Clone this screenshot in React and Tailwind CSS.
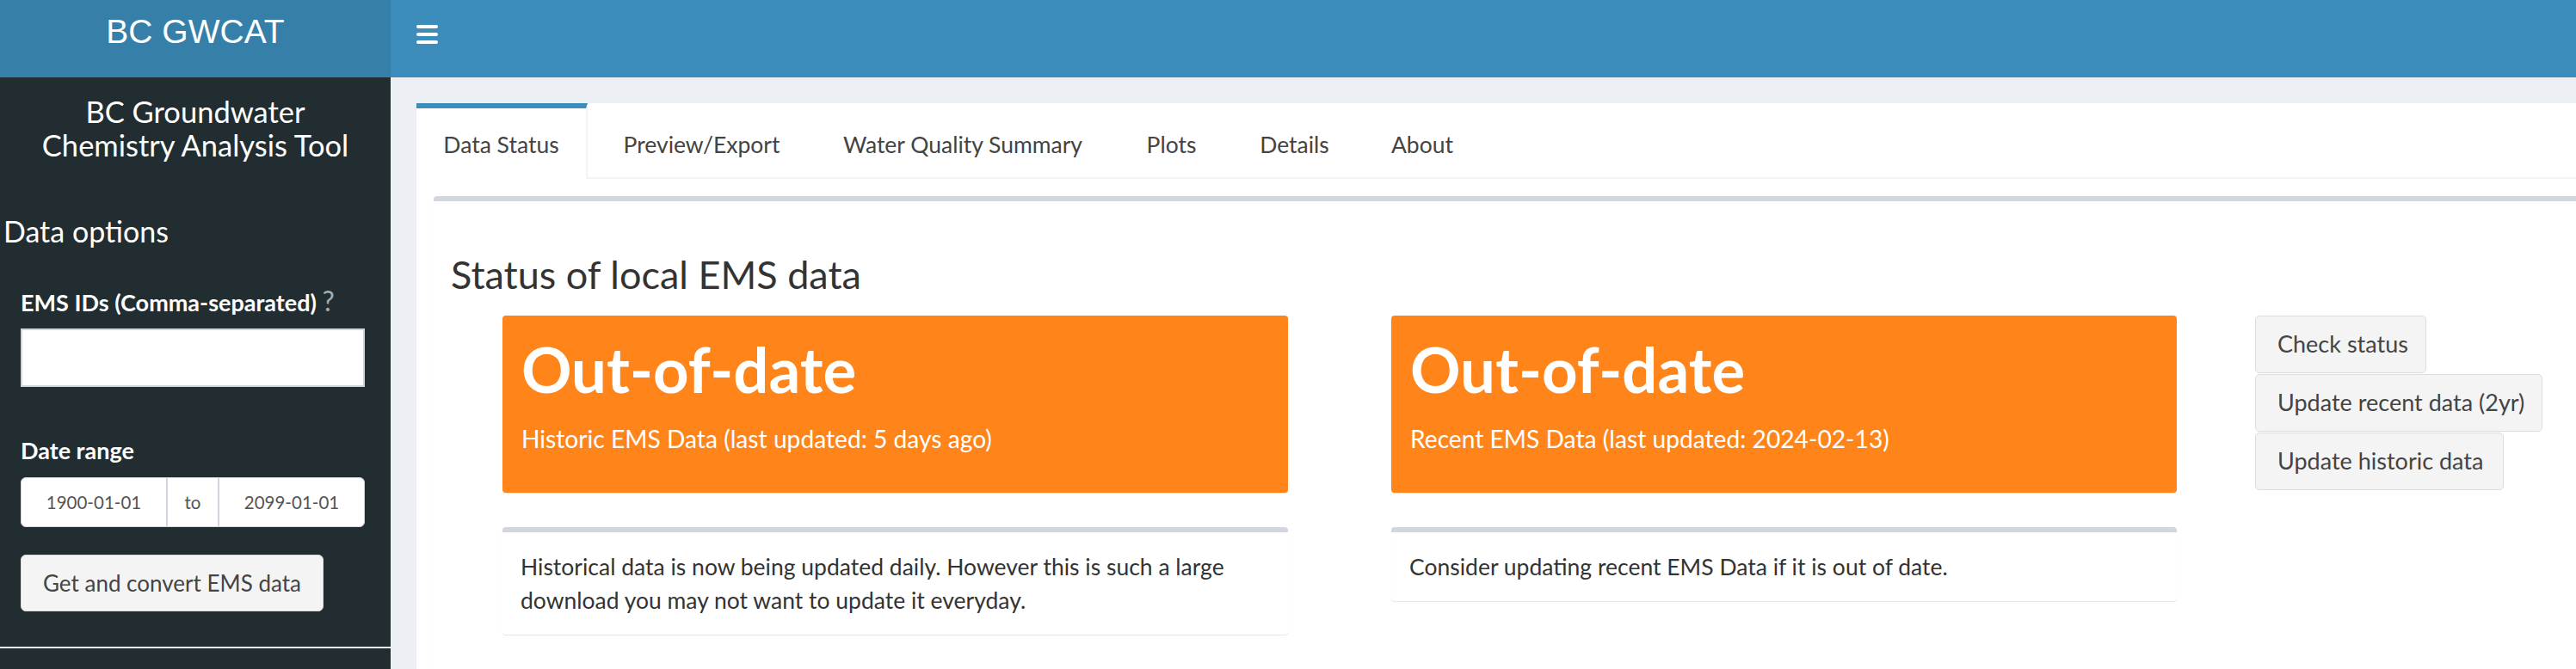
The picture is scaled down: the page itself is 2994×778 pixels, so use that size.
export default function App() {
  const tabs = [
    { label: "Data Status", w: "w-[199px]", active: true },
    { label: "Preview/Export", w: "w-[245px]" },
    { label: "Water Quality Summary", w: "w-[342px]" },
    { label: "Plots", w: "w-[123px]" },
    { label: "Details", w: "w-[143px]" },
    { label: "About", w: "w-[134px]" },
  ];
  return (
    <div className="flex h-[778px] w-[2994px] overflow-hidden font-['Lato',sans-serif] text-[#333]">
      {/* Sidebar */}
      <aside className="flex w-[454px] shrink-0 flex-col bg-[#222d32] text-white">
        <div className="h-[90px] shrink-0 bg-[#367fa9] pt-[14px] text-center font-['Liberation_Sans',Arial,sans-serif] text-[39px] leading-[46px]">
          BC GWCAT
        </div>
        <div className="mt-[20px] text-center text-[34.5px] leading-[39px]">
          BC Groundwater
          <br />
          Chemistry Analysis Tool
        </div>
        <div className="mt-[61px] pl-[4px] text-[34px] leading-[39px]">Data options</div>
        <div className="px-[24px]">
          <div className="mt-[46px] whitespace-nowrap text-[27px] font-bold leading-[36px]">
            EMS IDs (Comma-separated){" "}
            <span className="text-[32px] font-normal leading-none text-[#a3adb3]">?</span>
          </div>
          <div className="mt-[12px] h-[68px] w-[400px] border-2 border-[#d2d6de] bg-white" />
          <div className="mt-[56px] text-[27px] font-bold leading-[36px]">Date range</div>
          <div className="mt-[13px] flex h-[58px] w-[400px] overflow-hidden rounded-[6px] border border-[#d2d6de] bg-white text-[20.5px] text-[#555]">
            <div className="flex w-[168px] items-center justify-center">1900-01-01</div>
            <div className="flex w-[62px] items-center justify-center border-x-2 border-[#d2d6de]">to</div>
            <div className="flex flex-1 items-center justify-center">2099-01-01</div>
          </div>
          <button className="mt-[32px] h-[66px] w-[352px] rounded-[6px] border border-[#ddd] bg-[#f4f4f4] text-[26px] text-[#444]">
            Get and convert EMS data
          </button>
        </div>
        <div className="mt-[41px] h-[2px] w-full bg-[#e6ebee]" />
      </aside>

      {/* Main */}
      <div className="flex min-w-0 flex-1 flex-col bg-[#ecf0f5]">
        <header className="h-[90px] shrink-0 bg-[#3c8dbc] pl-[30px] pt-[29px]">
          <div className="flex w-[25px] flex-col gap-[5px]">
            <span className="h-[4px] rounded-full bg-white" />
            <span className="h-[4px] rounded-full bg-white" />
            <span className="h-[4px] rounded-full bg-white" />
          </div>
        </header>
        <div className="flex-1 overflow-hidden pl-[30px] pt-[30px]">
          <div className="h-full w-[2600px] bg-white shadow-[0_1px_1px_rgba(0,0,0,0.1)]">
            <nav className="flex h-[88px] border-b-2 border-[#f4f4f4]">
              {tabs.map((t) =>
                t.active ? (
                  <div
                    key={t.label}
                    className={`${t.w} mr-[10px] h-[88px] shrink-0 border-r-2 border-t-[6px] border-r-[#f4f4f4] border-t-[#3c8dbc] bg-white pt-[22px] text-center text-[26.5px] leading-[40px] text-[#444]`}
                  >
                    {t.label}
                  </div>
                ) : (
                  <div
                    key={t.label}
                    className={`${t.w} mr-[10px] shrink-0 border-t-[6px] border-transparent pt-[22px] text-center text-[26.5px] leading-[40px] text-[#444]`}
                  >
                    {t.label}
                  </div>
                )
              )}
            </nav>
            <div className="pl-[20px] pt-[20px]">
              <div className="h-[600px] rounded-t-[4px] border-t-[6px] border-[#d2d6de] bg-white shadow-[0_1px_1px_rgba(0,0,0,0.1)]">
                <div className="pl-[20px]">
                  <h3 className="pt-[59px] text-[45px] leading-[53px] text-[#333]">Status of local EMS data</h3>
                  <div className="ml-[60px] mt-[21px] flex items-start">
                    <div className="w-[913px] shrink-0">
                      <div className="h-[206px] rounded-[4px] bg-[#ff851b] pl-[22px] pt-[20px] text-white shadow-[0_1px_1px_rgba(0,0,0,0.1)]">
                        <div className="text-[72.5px] font-bold leading-[84px]">Out-of-date</div>
                        <div className="mt-[18px] text-[28.2px] leading-[42px]">Historic EMS Data (last updated: 5 days ago)</div>
                      </div>
                      <div className="mt-[40px] rounded-[4px] border-t-[6px] border-[#d2d6de] bg-white pb-[20px] pl-[21px] pt-[21px] text-[26.5px] leading-[39px] text-[#333] shadow-[0_1px_1px_rgba(0,0,0,0.1)]">
                        <div className="whitespace-nowrap">Historical data is now being updated daily. However this is such a large</div>
                        <div className="whitespace-nowrap">download you may not want to update it everyday.</div>
                      </div>
                    </div>
                    <div className="ml-[120px] w-[913px] shrink-0">
                      <div className="h-[206px] rounded-[4px] bg-[#ff851b] pl-[22px] pt-[20px] text-white shadow-[0_1px_1px_rgba(0,0,0,0.1)]">
                        <div className="text-[72.5px] font-bold leading-[84px]">Out-of-date</div>
                        <div className="mt-[18px] text-[28.2px] leading-[42px]">Recent EMS Data (last updated: 2024-02-13)</div>
                      </div>
                      <div className="mt-[40px] rounded-[4px] border-t-[6px] border-[#d2d6de] bg-white pb-[20px] pl-[21px] pt-[21px] text-[26.5px] leading-[39px] text-[#333] shadow-[0_1px_1px_rgba(0,0,0,0.1)]">
                        <div className="whitespace-nowrap">Consider updating recent EMS Data if it is out of date.</div>
                      </div>
                    </div>
                    <div className="ml-[91px] flex shrink-0 flex-col items-start gap-[1px]">
                      <button className="h-[67px] w-[199px] rounded-[5px] border border-[#ddd] bg-[#f4f4f4] pl-[25px] text-left text-[27px] text-[#444]">
                        Check status
                      </button>
                      <button className="h-[67px] w-[334px] rounded-[5px] border border-[#ddd] bg-[#f4f4f4] pl-[25px] text-left text-[27px] text-[#444]">
                        Update recent data (2yr)
                      </button>
                      <button className="h-[67px] w-[289px] rounded-[5px] border border-[#ddd] bg-[#f4f4f4] pl-[25px] text-left text-[27px] text-[#444]">
                        Update historic data
                      </button>
                    </div>
                  </div>
                </div>
              </div>
            </div>
          </div>
        </div>
      </div>
    </div>
  );
}
